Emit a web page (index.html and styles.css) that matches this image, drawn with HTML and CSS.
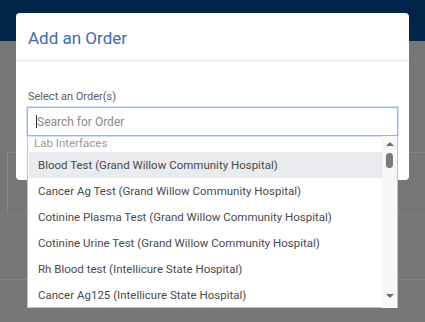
FILE: index.html
```html
<!DOCTYPE html>
<html lang="en">

<head>
  <meta charset="UTF-8">
  <meta name="viewport" content="width=device-width, initial-scale=1.0">
  <title>Add an Order</title>
  <link rel="stylesheet" href="styles.css">
</head>

<body>
  <div class="topbar"></div>
  <div class="page">
    <div class="page-card"></div>
    <div class="page-row row-a"></div>
    <div class="page-row row-b"></div>
  </div>

  <!-- modal -->
  <div class="modal">
    <div class="modal-header">
      <h2>Add an Order</h2>
    </div>
    <div class="modal-body">
      <label>Select an Order(s)</label>
    </div>
  </div>

  <!-- open dropdown -->
  <div class="dropdown">
    <div class="search"><span class="caret"></span>Search for Order</div>
    <div class="results">
      <ul class="options">
        <li class="group">Lab Interfaces</li>
        <li class="active">Blood Test (Grand Willow Community Hospital)</li>
        <li>Cancer Ag Test (Grand Willow Community Hospital)</li>
        <li>Cotinine Plasma Test (Grand Willow Community Hospital)</li>
        <li>Cotinine Urine Test (Grand Willow Community Hospital)</li>
        <li>Rh Blood test (Intellicure State Hospital)</li>
        <li>Cancer Ag125 (Intellicure State Hospital)</li>
      </ul>
      <div class="scrollbar">
        <span class="arrow up"></span>
        <span class="thumb"></span>
        <span class="arrow down"></span>
      </div>
    </div>
  </div>
</body>

</html>
```

FILE: styles.css
```css
body {
  margin: 0;
  height: 322px;
  overflow: hidden;
  background-color: #767676;
  font-family: Roboto, "Liberation Sans", sans-serif;
}

.topbar {
  height: 41px;
  background-color: #022448;
}

.page {
  position: relative;
  height: 170px;
  padding-top: 111px;
}

.page-card {
  margin-left: 7px;
  height: 60px;
  border-top: 1px solid #858585;
  border-left: 1px solid #858585;
}

.page-row {
  height: 0;
  border-top: 1px solid #6c6c6c;
}

.row-a {
  margin-top: 1px;
  border-top-color: #7f7f7f;
}

.row-b {
  margin-top: 64px;
  border-top-color: #858585;
}

.modal {
  position: absolute;
  left: 16px;
  top: 13px;
  width: 393px;
  height: 167px;
  background: #fff;
  border-radius: 4px;
}

.modal-header {
  height: 47px;
  padding: 0 12px;
  border-bottom: 1px solid #e8e8e8;
  display: flex;
  align-items: center;
}

.modal-header h2 {
  margin: 2px 0 0;
  font-size: 17px;
  font-weight: 400;
  color: #3f6cae;
}

.modal-body {
  padding: 24px 12px 0;
}

.modal-body label {
  font-size: 11px;
  color: #5c5c5c;
}

.dropdown {
  position: absolute;
  left: 27px;
  top: 107px;
  width: 369px;
  height: 199px;
  border: 1px solid #a9c7f2;
  background: #fff;
}

.search {
  height: 27px;
  margin: -1px -1px 0;
  border: 1px solid #8fb6f0;
  box-shadow: 0 0 0 1px #cfe0fb;
  display: flex;
  align-items: center;
  padding-left: 8px;
  font-size: 12px;
  color: #8a8a8a;
}

.caret {
  width: 1px;
  height: 13px;
  background: #333;
}

.results {
  display: flex;
  height: 172px;
}

.options {
  flex: 1;
  margin: 0;
  padding: 0;
  list-style: none;
}

.options li {
  height: 26px;
  display: flex;
  align-items: center;
  padding-left: 9px;
  margin-left: 1px;
  font-size: 11.5px;
  color: #4a4a4a;
}

.options li.group {
  height: 16px;
  padding-left: 5px;
  color: #9a9a9a;
  align-items: flex-start;
}

.options li.active {
  background-color: #e9ebee;
}

.scrollbar {
  width: 15px;
  background-color: #f7f7f7;
  display: flex;
  flex-direction: column;
  align-items: center;
  padding-top: 6px;
}

.arrow {
  width: 0;
  height: 0;
  border-left: 4px solid transparent;
  border-right: 4px solid transparent;
}

.arrow.up {
  border-bottom: 4px solid #6e6e6e;
}

.arrow.down {
  border-top: 4px solid #6e6e6e;
  margin-top: auto;
  margin-bottom: 10px;
}

.thumb {
  width: 7px;
  height: 15px;
  margin-top: 7px;
  border-radius: 4px;
  background-color: #7a7a7a;
}
```
